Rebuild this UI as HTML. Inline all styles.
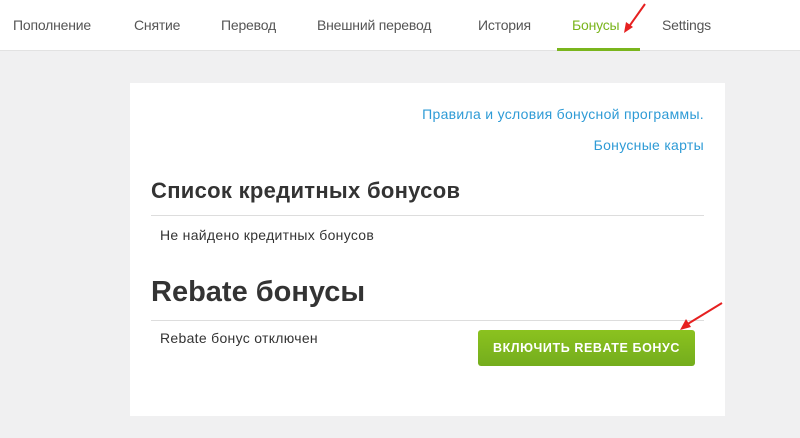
<!DOCTYPE html>
<html><head><meta charset="utf-8"><style>
*{margin:0;padding:0;box-sizing:border-box}
body{width:800px;height:438px;background:#f0f0f1;font-family:"Liberation Sans",sans-serif;position:relative;overflow:hidden}
.nav{position:absolute;left:0;top:0;width:800px;height:51px;background:#fff;border-bottom:1px solid #e2e2e2}
.nav span{position:absolute;top:17px;font-size:14px;color:#555;letter-spacing:-0.2px}
.nav .act{color:#7ab51d}
.ul{position:absolute;left:557px;top:48px;width:83px;height:3px;background:#7ab51d}
.card{position:absolute;left:130px;top:83px;width:595px;height:333px;background:#fff}
.link{position:absolute;right:21px;font-size:14px;color:#2e9bd6;letter-spacing:0.3px}
h2{position:absolute;left:21px;font-weight:bold;color:#333;white-space:nowrap}
.hr{position:absolute;left:21px;width:553px;height:1px;background:#ddd}
.t{position:absolute;left:30px;font-size:14px;color:#333;letter-spacing:0.3px}
.btn{position:absolute;left:348px;top:247px;width:217px;height:36px;border-radius:3px;background:linear-gradient(#8bc21f,#74ad1d);color:#fff;font-size:12.5px;font-weight:bold;text-align:center;line-height:36px;letter-spacing:0.6px}
</style></head><body>
<div class="nav">
<span style="left:13px">Пополнение</span>
<span style="left:134px">Снятие</span>
<span style="left:221px">Перевод</span>
<span style="left:317px">Внешний перевод</span>
<span style="left:478px">История</span>
<span class="act" style="left:572px">Бонусы</span>
<span style="left:662px">Settings</span>
<div class="ul"></div>
</div>
<svg style="position:absolute;left:615px;top:0" width="40" height="35"><path d="M30 4 L13 28" stroke="#e62020" stroke-width="2"/><path d="M9 33 L11 22 L18 27 Z" fill="#e62020"/></svg>
<div class="card">
<div class="link" style="top:23px">Правила и условия бонусной программы.</div>
<div class="link" style="top:54px">Бонусные карты</div>
<h2 style="top:95px;font-size:22px;letter-spacing:0.3px">Список кредитных бонусов</h2>
<div class="hr" style="top:132px"></div>
<div class="t" style="top:144px">Не найдено кредитных бонусов</div>
<h2 style="top:193px;font-size:29px">Rebate бонусы</h2>
<div class="hr" style="top:237px"></div>
<div class="t" style="top:247px">Rebate бонус отключен</div>
<div class="btn">ВКЛЮЧИТЬ REBATE БОНУС</div>
</div>
<svg style="position:absolute;left:672px;top:298px" width="56" height="36"><path d="M50 5 L14 27" stroke="#e62020" stroke-width="2"/><path d="M8 32 L14 21 L19 29 Z" fill="#e62020"/></svg>
</body></html>
